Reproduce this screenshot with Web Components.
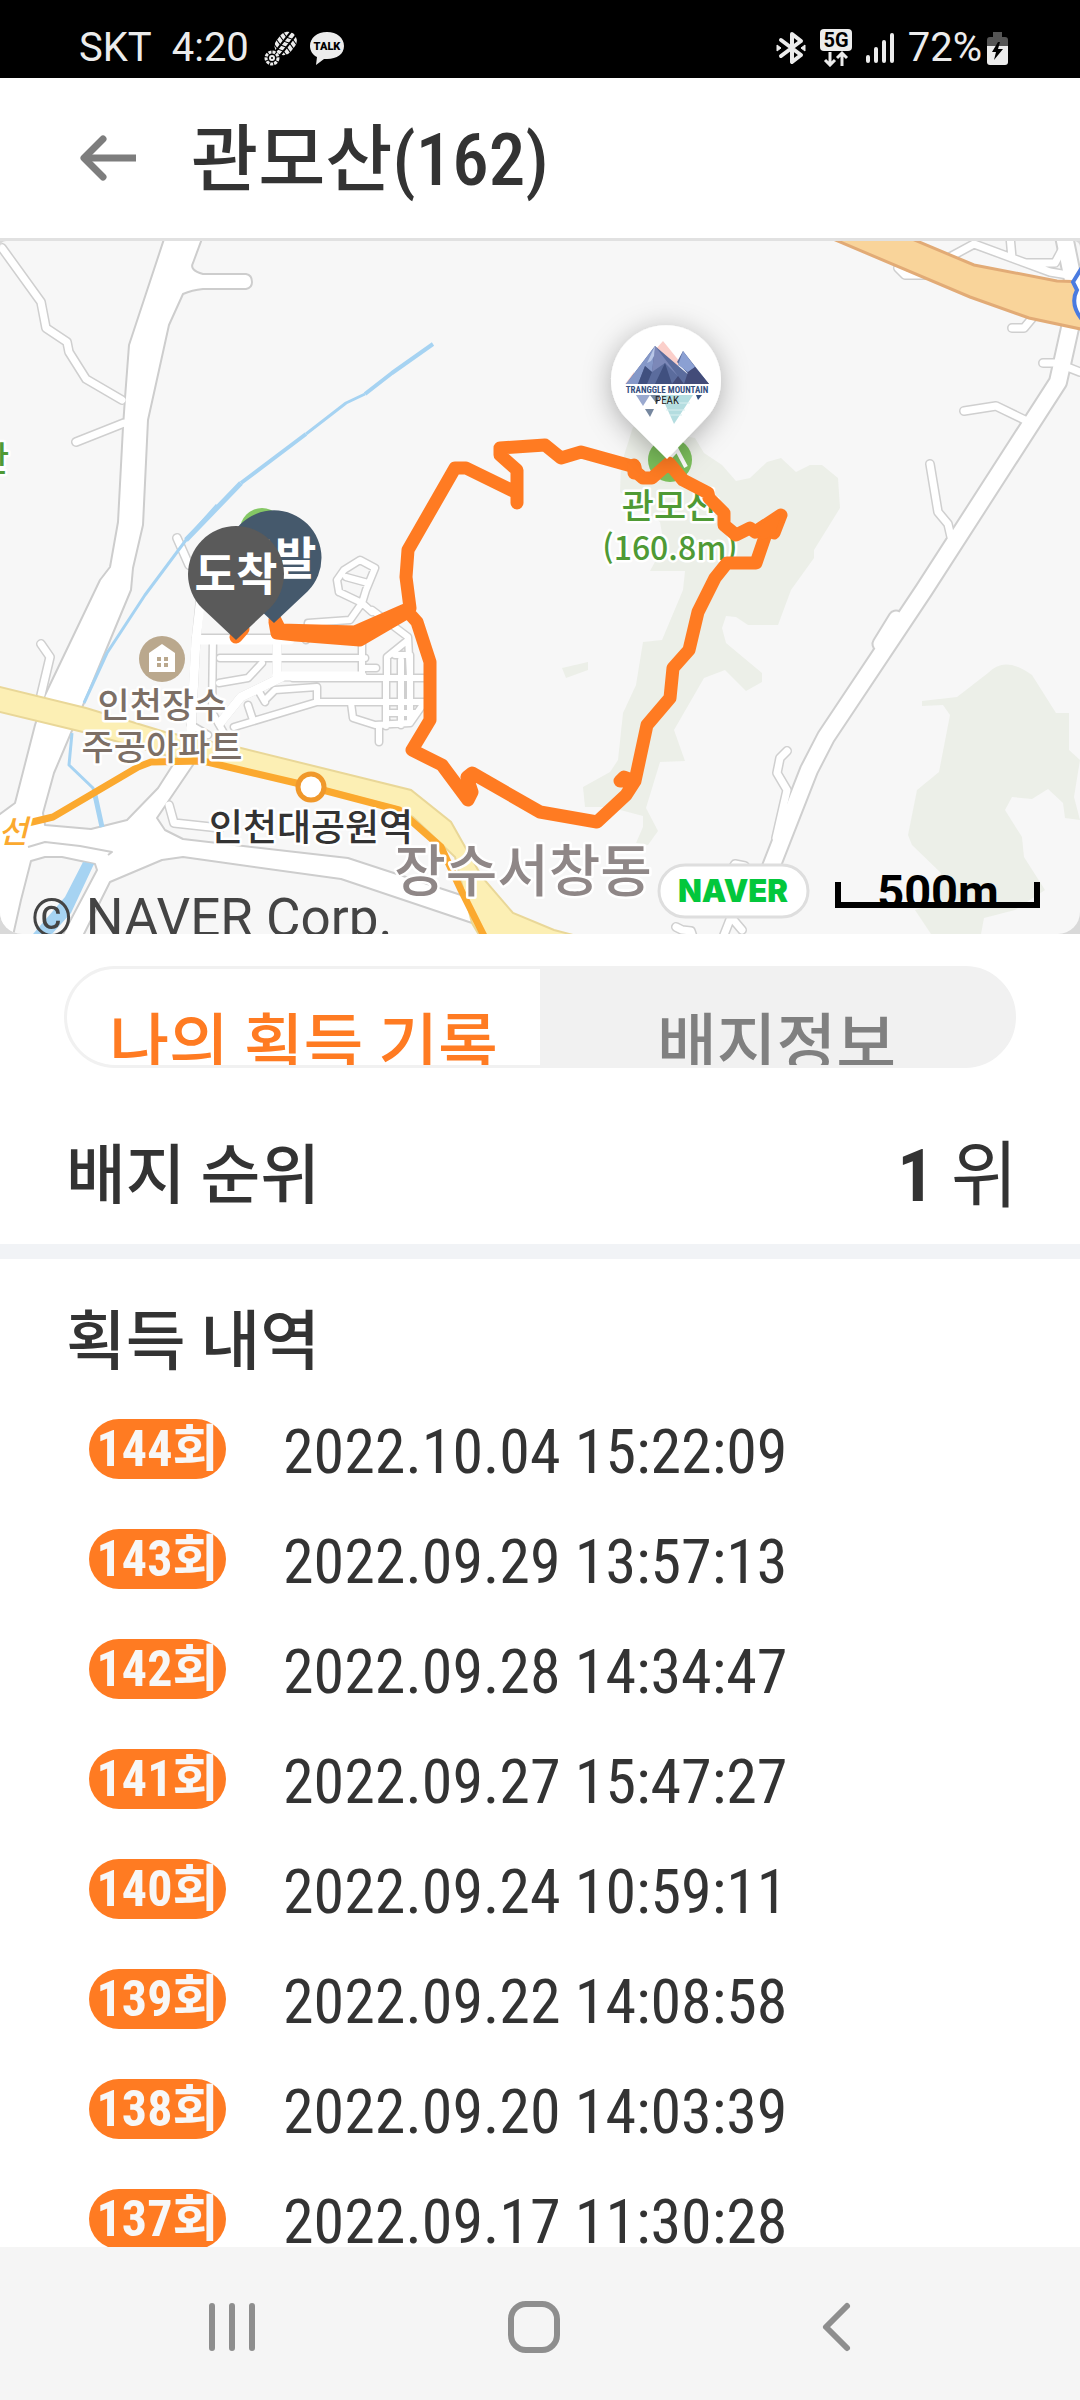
<!DOCTYPE html>
<html lang="ko">
<head>
<meta charset="utf-8">
<meta name="viewport" content="width=device-width, initial-scale=1">
<title>관모산(162)</title>
<style>
  body {
    margin: 0;
    height: 100vh;
    overflow: hidden;
    display: flex;
    flex-direction: column;
    background: #fff;
    color: #333;
    font-family: "Roboto Condensed", "Liberation Sans Narrow", "Noto Sans CJK KR", sans-serif;
  }
  main {
    flex: 1;
    min-height: 0;
    overflow: hidden;
  }
</style>
</head>
<body>
  <status-bar carrier="SKT" time="4:20" battery="72%"></status-bar>
  <app-header>관모산(162)</app-header>
  <main>
    <trail-map></trail-map>
    <segment-tabs>
      <segment-tab selected>나의 획득 기록</segment-tab>
      <segment-tab>배지정보</segment-tab>
    </segment-tabs>
    <badge-rank rank="1">배지 순위</badge-rank>
    <record-list>
      <span slot="title">획득 내역</span>
      <record-item count="144">2022.10.04 15:22:09</record-item>
      <record-item count="143">2022.09.29 13:57:13</record-item>
      <record-item count="142">2022.09.28 14:34:47</record-item>
      <record-item count="141">2022.09.27 15:47:27</record-item>
      <record-item count="140">2022.09.24 10:59:11</record-item>
      <record-item count="139">2022.09.22 14:08:58</record-item>
      <record-item count="138">2022.09.20 14:03:39</record-item>
      <record-item count="137">2022.09.17 11:30:28</record-item>
    </record-list>
  </main>
  <nav-bar></nav-bar>

<script>
class StatusBar extends HTMLElement {
  constructor() {
    super();
    this.attachShadow({ mode: 'open' });
  }

  connectedCallback() {
    this.shadowRoot.innerHTML = `
      <style>
        :host {
          flex: none;
          box-sizing: border-box;
          height: 78px;
          padding: 18px 72px 0 79px;
          display: flex;
          justify-content: space-between;
          align-items: center;
          background: #000;
          color: #ececec;
          font: 40px/40px Roboto, sans-serif;
        }
        div { display: flex; align-items: center; }
        .left { gap: 14px; }
        .right { gap: 14px; }
        .text { gap: 20px; }
        .icons { gap: 10px; }
        .power { gap: 5px; }
        svg { display: block; fill: none; stroke: #ececec; }
      </style>
      <div class="left">
        <div class="text">
          <span>${this.getAttribute('carrier')}</span>
          <span>${this.getAttribute('time')}</span>
        </div>
        <div class="icons">
          <svg width="36" height="36" viewBox="0 0 36 36" aria-hidden="true">
            <g transform="rotate(38 23 13)">
              <rect x="14" y="1" width="18" height="25" rx="9" fill="#ececec" stroke="none"/>
              <path d="M20 0v27M26 0v27" stroke="#000" stroke-width="2"/>
              <path d="M13 6l7 2 6-2 7 2M13 11l7 2 6-2 7 2M13 16l7 2 6-2 7 2M13 21l7 2 6-2 7 2" stroke="#000" stroke-width="1"/>
            </g>
            <circle cx="9" cy="28" r="6" stroke-width="3" stroke-dasharray="3 1"/>
            <circle cx="9" cy="28" r="2" stroke-width="2"/>
          </svg>
          <svg width="36" height="36" viewBox="0 0 36 36" aria-hidden="true">
            <path d="M18 2c10 0 17 6 17 14S28 29 18 29h-3l-8 6 1-8C4 25 1 21 1 16 1 8 8 2 18 2z" fill="#ececec" stroke="none"/>
            <text x="18" y="20" text-anchor="middle" font-family="Roboto, sans-serif" font-size="11" font-weight="900" fill="#000" stroke="none">TALK</text>
          </svg>
        </div>
      </div>
      <div class="right">
        <svg width="30" height="36" viewBox="0 0 30 36" aria-hidden="true">
          <path d="M5 10l20 15-9 7V4l9 7L5 26" stroke-width="4" stroke-linejoin="round" stroke-linecap="round"/>
          <path d="M1 15l4 3-4 3zM29 15l-4 3 4 3z" fill="#ececec" stroke-width="1"/>
        </svg>
        <svg width="32" height="38" viewBox="0 0 32 38" aria-hidden="true">
          <rect y="0" width="32" height="22" rx="4" fill="#ececec" stroke="none"/>
          <text x="16" y="18" text-anchor="middle" font-family="Roboto, sans-serif" font-size="20" font-weight="700" fill="#000" stroke="none">5G</text>
          <path d="M10 23v13M5 31l5 5 5-5M22 37V24M17 29l5-5 5 5" stroke-width="3"/>
        </svg>
        <svg width="28" height="30" viewBox="0 0 28 30" aria-hidden="true">
          <path d="M2 24v4M10 16v12M18 9v19M26 2v26" stroke-width="4" stroke-linecap="round"/>
        </svg>
        <div class="power">
          <span>${this.getAttribute('battery')}</span>
          <svg width="21" height="33" viewBox="0 0 21 33" aria-hidden="true">
            <path d="M6 0h9v5h3q3 0 3 3v6H0V8q0-3 3-3h3z" fill="#555" stroke="none"/>
            <path d="M0 14h21v16q0 3-3 3H3q-3 0-3-3z" fill="#ececec" stroke="none"/>
            <path d="M11 10l-6 10h4l-2 8 9-11h-5l2-7z" fill="#000" stroke="none"/>
          </svg>
        </div>
      </div>
    `;
  }
}
customElements.define('status-bar', StatusBar);

class AppHeader extends HTMLElement {
  constructor() {
    super();
    this.attachShadow({ mode: 'open' });
  }

  connectedCallback() {
    this.shadowRoot.innerHTML = `
      <style>
        :host {
          flex: none;
          display: flex;
          align-items: center;
          gap: 54px;
          height: 160px;
          padding: 0 79px;
          border-bottom: 3px solid #e1e1e1;
        }
        button {
          padding: 0;
          border: 0;
          background: none;
          cursor: pointer;
        }
        svg { display: block; }
        h1 {
          margin: 0;
          padding-top: 4px;
          font-size: 73px;
          line-height: 80px;
          font-weight: 500;
        }
      </style>
      <button aria-label="뒤로">
        <svg width="58" height="48" viewBox="0 0 58 48" fill="none" stroke="#7d7d7d" stroke-width="7">
          <path d="M57 24H6"/>
          <path d="M24 5L5 24l19 19" stroke-linecap="round" stroke-linejoin="round"/>
        </svg>
      </button>
      <h1><slot></slot></h1>
    `;
  }
}
customElements.define('app-header', AppHeader);

// Side streets share one casing and one fill, so that crossings join up.
const streets = `
  M2 248L41 302 46 328 67 342 69 352 86 379 122 400 M76 442L124 423
  M41 644L50 657 41 695 M177 538L189 565 M169 805L174 823 220 828
  M964 411L996 406 1029 422 M930 464L938 512 948 524 951 537
  M1043 363H1057L1080 372 M1012 328H1024L1034 316
  M787 751L780 758 777 773 787 790 776 838
  M898 268L905 275H926 M950 257L974 244 1050 272 1080 277
  M1010 236L1012 258 M1027 263H1055L1062 250 M676 927L682 930 691 931 694 940
  M728 875L735 864 745 866 752 880 M722 940L731 917 742 930`;

const grid = `
  M201 590L196 640 191 738 M213 638L212 712 M196 638H272 M277 638V673
  M220 658H365 M293 678H424 M220 723L241 697 282 677H362
  M219 683L248 678 262 663 M265 700L275 690 317 687V702
  M234 727L317 702H424 M248 705L253 720 M258 690L265 702 M362 640V678
  M372 610L408 637 410 677 M306 640L308 623 350 620 362 603 339 592
  M362 603L372 612 M387 678V657L408 640 M386 678V726 M401 660V725 M395 655H410V723
  M351 703L353 718 375 725 410 723 424 703 M379 725V742 M386 713H417
  M362 668H376 M362 603L366 590 375 568 360 560 344 570 337 580 339 592
  M346 577L368 583 M212 712L225 735 M191 725L208 735`;

class TrailMap extends HTMLElement {
  constructor() {
    super();
    this.attachShadow({ mode: 'open' });
  }

  connectedCallback() {
    this.shadowRoot.innerHTML = `
      <style>
        :host { display: block; background: #d9d9d9; }
        svg {
          display: block;
          width: 100%;
          height: auto;
          border-radius: 6px 6px 22px 22px;
          background: #f7f7f7;
          font-family: "Noto Sans CJK KR", sans-serif;
        }
        .wood { fill: #ecefe8; }
        .water { fill: none; stroke: #a6d3f2; stroke-linejoin: round; }
        .road { fill: #fff; stroke: #cdcdcd; stroke-width: 2; stroke-linejoin: round; }
        .case, .lane { fill: none; stroke-linecap: round; stroke-linejoin: round; }
        .case { stroke: #cfcfcf; }
        .lane { stroke: #fff; }
        .track {
          fill: none;
          stroke: #ff7b22;
          stroke-width: 13;
          stroke-linecap: round;
          stroke-linejoin: round;
        }
        .label {
          font-size: 35px;
          text-anchor: middle;
          paint-order: stroke;
          stroke: #fff;
          stroke-width: 5px;
          stroke-linejoin: round;
          font-weight: 500;
        }
        .height { font-size: 32px; }
        .station { font-size: 37px; }
        .town { font-size: 56px; }
        .pin { font-size: 45px; font-weight: 700; text-anchor: middle; fill: #fff; }
      </style>
      <svg viewBox="0 241 1080 693" role="img" aria-label="관모산 등산 경로">
        <defs>
          <filter id="shadow" x="-50%" y="-50%" width="200%" height="200%">
            <feDropShadow dx="0" dy="5" stdDeviation="14" flood-opacity="0.3"/>
          </filter>
        </defs>

        <path class="wood" d="M633 427L621 465 620 492 660 522 664 545 650 571H685L683 590 662 640 643 642 636 685 623 713 618 760 610 772 583 787 585 807H609L643 816V827L636 843 648 845 658 831 646 808 660 762 685 761 674 730 704 678 725 670 746 691 762 682V673L726 643 722 628 726 616 736 617 748 625H778L791 590 814 558V550L840 508 838 478 822 465H810L796 472 781 458 767 462 750 478 736 481 722 465 704 453 695 438z"/>
        <path class="wood" d="M922 701L957 697 988 673Q1005 655 1032 675L1056 713H1069V750L1080 760 1074 797 1080 820 1065 818 1063 803 1048 789 1032 799 1012 797 1005 810 1022 837 1024 857 1045 890 1015 910 984 918 981 934H931L915 910 939 903 941 873 912 845 908 835 917 790 939 772 950 715 943 705 922 706z"/>
        <path class="wood" d="M562 668L588 662V670L566 678z"/>

        <path class="case" stroke-width="10" d="${streets}"/>
        <path class="case" stroke-width="9" d="${grid}"/>
        <path class="case" stroke-width="20" d="M1064 236L1073 280 1070 328 1058 382 924 590 826 737 809 770 771 867"/>
        <path class="case" stroke-width="17" d="M896 618L880 644"/>
        <path class="road" d="M165 236L129 345 125 398 123 427 118 522 110 567 100 580 45 695 35 725 15 803 -4 817V940H12L21 900 31 861 45 857H62L95 864 97 870 60 940H81L110 882 162 860 183 857 341 879 472 923 480 900 461 895 348 858 183 839 165 830 157 818 193 765 200 740 174 763 158 788 127 820 91 829 45 825 43 813 54 773 71 733 84 703 131 590 133 568 143 525 148 420 169 325 183 294Q192 290 203 289H246Q252 288 252 282 252 275 246 274H203Q189 270 193 263L203 236z"/>
        <path class="road" d="M28 847L45 842 80 846 112 852 108 855" stroke-width="1"/>
        <path class="lane" stroke-width="7" d="${streets}"/>
        <path class="lane" stroke-width="6" d="${grid}"/>
        <path class="lane" stroke-width="9" d="M201 597L196 640 191 732M196 640H290M277 640V676H362M220 723L241 697 282 677"/>
        <path class="lane" stroke-width="16" d="M1064 236L1073 280 1070 328 1058 382 924 590 826 737 809 770 771 867"/>
        <path class="lane" stroke-width="13" d="M896 618L880 644"/>

        <path class="water" stroke-width="3" d="M365 394L346 403 306 434M217 505L186 540 145 595 107 653 84 703M72 733L69 765 93 788 102 827"/>
        <path class="water" stroke-width="4" d="M433 344L392 373 365 394M306 434L241 483"/>
        <path class="water" stroke-width="5" d="M241 483L186 540M95 795L102 827"/>
        <path d="M83 862L94 864 71 913 52 934H33L65 897z" fill="#a6d3f2"/>

        <path d="M-4 686L86 708 165 732 241 748 411 790 451 822 482 877 513 913 554 930 592 940H482L472 923 455 857 413 817 396 807 293 780 172 757 83 732 -4 711z" fill="#fcefb4" stroke="#e9d798" stroke-width="2"/>
        <path d="M826 236L970 297 1029 318 1090 331V282L1057 281 974 265 905 236z" fill="#f9d49a" stroke="#e2ab76" stroke-width="3"/>
        <path d="M1084 264L1073 282 1077 290Q1069 305 1084 322z" fill="#fff" stroke="#4a7be0" stroke-width="4"/>

        <path d="M28 823L53 817 138 767 151 762 203 761 296 783 399 810 441 847 461 890 486 940" fill="none" stroke="#fba92f" stroke-width="7" stroke-linejoin="round"/>
        <circle cx="311" cy="787" r="13" fill="#fff" stroke="#f0982b" stroke-width="5"/>

        <circle cx="262" cy="530" r="22" fill="#85c765"/>
        <circle cx="670" cy="460" r="22" fill="#7cbf5c"/>
        <path d="M665 463l12-13 9 17" fill="none" stroke="#fff" stroke-width="4"/>
        <circle cx="162" cy="659" r="23" fill="#baa88d"/>
        <path d="M149 653L162 644 175 653V672H149z" fill="#fff"/>
        <path d="M157 657h4v4h-4zM164 657h4v4h-4zM157 663h4v4h-4zM164 663h4v4h-4z" fill="#baa88d"/>

        <text class="label" x="-7" y="472" fill="#4f9a35">산</text>
        <text class="label" x="670" y="519" fill="#4f9a35">관모산</text>
        <text class="label height" x="670" y="560" fill="#4f9a35">(160.8m)</text>
        <text class="label" x="162" y="718" fill="#7c6f66">인천장수</text>
        <text class="label" x="162" y="760" fill="#7c6f66">주공아파트</text>
        <text class="label height" x="13" y="843" fill="#fba92f" font-style="italic">선</text>
        <text class="label station" x="311" y="841" fill="#333">인천대공원역</text>
        <text class="label town" x="523" y="891" fill="#8f8787">장수서창동</text>

        <path class="track" d="M275 622L277 633 296 635 360 640 408 612M275 620L280 630 355 632 403 611 410 608 406 577 408 550 455 468H466L517 493V503 470L500 455V448L545 445 561 458 581 452 635 467 636 472 643 478H652L669 463 683 480 708 493 709 498 724 513V525L736 535 750 528 755 532 781 515 774 533 768 528 756 563H727L715 578 698 612 689 650 673 668 670 698 647 725 635 781H620L624 777 635 781 626 795 597 822 540 812 472 773 467 777 472 792 468 800 442 765 412 750 430 720V662L417 622 408 612"/>
        <path class="track" d="M634 465v8M236 637L243 629"/>
        <path d="M755 528L781 513 775 535 762 540z" fill="#ff7b22"/>

        <path d="M274 623L240 591A47.500 47.500 0 1 1 308 591z" fill="#45596c"/>
        <text class="pin" x="275" y="575">출발</text>
        <path d="M236 640L202 608A48 48 0 1 1 270 608z" fill="#5a5a5a"/>
        <text class="pin" x="236" y="591">도착</text>

        <g>
          <path d="M667 459L625 417A55 55 0 1 1 707 417z" fill="#fff" filter="url(#shadow)"/>
          <path d="M663 341L680 362 676 372 655 350zM625 384L634 372 636 384z" fill="#fbcfca"/>
          <path d="M655 346L626 384H709L683 351 677 362 690 376z" fill="#5b6c9d"/>
          <path d="M655 346L626 384H638L645 366 652 372z" fill="#8598c8"/>
          <path d="M655 346L652 372 665 363 678 376z" fill="#7c88b8"/>
          <path d="M683 351L678 365 688 372 695 367z" fill="#8ba0d3"/>
          <path d="M645 366L652 372 647 384H638zM665 363L672 384H655z" fill="#40507f"/>
          <path d="M688 372L695 367 709 384H684zM678 376L684 384H672z" fill="#434c79"/>
          <path d="M655 346L647 363 651 361 654 356z" fill="#b8c6e6"/>
          <path d="M636 395H650L643 406z" fill="#9aa9cf"/>
          <path d="M650 395H660L657 404zM645 409H654L650 417z" fill="#76879f"/>
          <path d="M696 395H702L698 400z" fill="#34507f"/>
          <path d="M661 395H693L674 424z" fill="#b4dde0"/>
          <path d="M664 403H690M666 410H685M670 415H682" stroke="#d9eff0" stroke-width="1"/>
          <g font-family="Roboto Condensed, Liberation Sans Narrow, sans-serif" text-anchor="middle" font-weight="700">
            <text x="667" y="393" font-size="9" fill="#34507f">TRANGGLE MOUNTAIN</text>
            <text x="667" y="404" font-size="11" fill="#222" font-weight="400">PEAK</text>
          </g>
        </g>

        <text x="31" y="936" font-family="Roboto, sans-serif" font-size="53" fill="#444">© NAVER Corp.</text>
        <rect x="659" y="865" width="149" height="52" rx="26" fill="#fff" stroke="#dedede" stroke-width="3"/>
        <text x="733" y="902" text-anchor="middle" font-family="Inter, sans-serif" font-size="31" font-weight="900" fill="#03c73c">NAVER</text>
        <text x="938" y="908" text-anchor="middle" font-family="Roboto, sans-serif" font-size="47" font-weight="700" fill="#000">500m</text>
        <path d="M838 882V905H1037V882" fill="none" stroke="#000" stroke-width="6"/>
      </svg>
    `;
  }
}
customElements.define('trail-map', TrailMap);

class SegmentTabs extends HTMLElement {
  constructor() {
    super();
    this.attachShadow({ mode: 'open' });
  }

  connectedCallback() {
    this.shadowRoot.innerHTML = `
      <style>
        :host {
          display: flex;
          height: 96px;
          margin: 32px 64px 0;
          border: 3px solid #f1f1f1;
          border-radius: 51px;
          background: #f1f1f1;
          overflow: hidden;
        }
      </style>
      <slot></slot>
    `;
    this.addEventListener('click', (e) => {
      const tab = e.target.closest('segment-tab');
      if (!tab) return;
      this.querySelectorAll('segment-tab').forEach((t) => t.toggleAttribute('selected', t === tab));
    });
  }
}
customElements.define('segment-tabs', SegmentTabs);

class SegmentTab extends HTMLElement {
  constructor() {
    super();
    this.attachShadow({ mode: 'open' });
  }

  connectedCallback() {
    this.shadowRoot.innerHTML = `
      <style>
        :host { flex: 1; display: flex; overflow: hidden; }
        button {
          flex: 1;
          padding: 28px 0 0;
          border: 0;
          background: none;
          color: #808080;
          font: inherit;
          font-size: 65px;
          line-height: 96px;
          font-weight: 500;
          white-space: nowrap;
          cursor: pointer;
        }
        :host([selected]) button { background: #fff; color: #ff7b22; }
      </style>
      <button><slot></slot></button>
    `;
  }
}
customElements.define('segment-tab', SegmentTab);

class BadgeRank extends HTMLElement {
  constructor() {
    super();
    this.attachShadow({ mode: 'open' });
  }

  connectedCallback() {
    this.shadowRoot.innerHTML = `
      <style>
        :host {
          display: flex;
          justify-content: space-between;
          align-items: center;
          height: 136px;
          padding: 40px 62px 0 66px;
          border-bottom: 15px solid #f1f3f6;
          line-height: 80px;
        }
        h2 { margin: 0; font-size: 65px; font-weight: 500; }
        p { margin: 0; font-size: 73px; }
        strong { font-weight: 700; }
      </style>
      <h2><slot></slot></h2>
      <p><strong>${this.getAttribute('rank')}</strong> 위</p>
    `;
  }
}
customElements.define('badge-rank', BadgeRank);

class RecordList extends HTMLElement {
  constructor() {
    super();
    this.attachShadow({ mode: 'open' });
  }

  connectedCallback() {
    this.shadowRoot.innerHTML = `
      <style>
        :host { display: block; padding-top: 43px; }
        h2 {
          margin: 0 66px 12px;
          font-size: 65px;
          line-height: 80px;
          font-weight: 500;
        }
      </style>
      <h2><slot name="title"></slot></h2>
      <div role="list"><slot></slot></div>
    `;
  }
}
customElements.define('record-list', RecordList);

class RecordItem extends HTMLElement {
  constructor() {
    super();
    this.attachShadow({ mode: 'open' });
  }

  connectedCallback() {
    this.setAttribute('role', 'listitem');
    this.shadowRoot.innerHTML = `
      <style>
        :host {
          display: flex;
          align-items: center;
          gap: 57px;
          height: 110px;
          padding: 0 89px;
        }
        .count {
          flex: none;
          width: 137px;
          border-radius: 30px;
          background: #ff7b22;
          color: #f7f7f7;
          font-size: 50px;
          line-height: 60px;
          font-weight: 700;
          text-align: center;
          white-space: nowrap;
        }
        time {
          padding-top: 6px;
          font-size: 62px;
          line-height: 80px;
          white-space: nowrap;
        }
      </style>
      <span class="count">${this.getAttribute('count')}회</span>
      <time><slot></slot></time>
    `;
  }
}
customElements.define('record-item', RecordItem);

class NavBar extends HTMLElement {
  constructor() {
    super();
    this.attachShadow({ mode: 'open' });
  }

  connectedCallback() {
    this.shadowRoot.innerHTML = `
      <style>
        :host {
          flex: none;
          display: grid;
          grid-template-columns: repeat(3, 1fr);
          height: 153px;
          padding: 0 93px 0 81px;
          background: #f5f5f5;
        }
        button {
          padding: 6px 0 0;
          border: 0;
          background: none;
          cursor: pointer;
        }
        svg { display: block; margin: auto; fill: none; stroke: #8e8e8e; }
      </style>
      <button aria-label="최근 앱">
        <svg width="56" height="56" viewBox="0 0 56 56" stroke-width="6" stroke-linecap="round">
          <path d="M8 7v42M28 7v42M48 7v42"/>
        </svg>
      </button>
      <button aria-label="홈">
        <svg width="56" height="56" viewBox="0 0 56 56" stroke-width="6">
          <rect x="5" y="5" width="46" height="46" rx="15"/>
        </svg>
      </button>
      <button aria-label="뒤로">
        <svg width="56" height="56" viewBox="0 0 56 56" stroke-width="6" stroke-linecap="round" stroke-linejoin="round">
          <path d="M39 7L18 28l21 21"/>
        </svg>
      </button>
    `;
  }
}
customElements.define('nav-bar', NavBar);
</script>
</body>
</html>
